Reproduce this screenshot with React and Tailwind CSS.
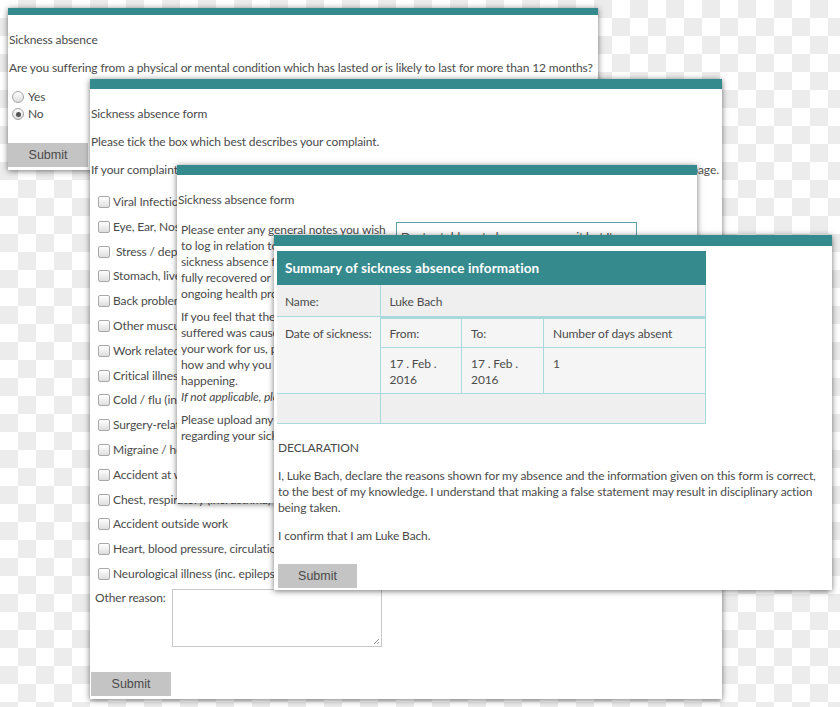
import React from "react";

const complaints = [
  "Viral Infection",
  "Eye, Ear, Nose, Mouth, Dental",
  " Stress / depression / anxiety",
  "Stomach, liver, kidney, digestion",
  "Back problems",
  "Other musculoskeletal problems",
  "Work related stress",
  "Critical illness",
  "Cold / flu (inc. sore throat)",
  "Surgery-related illness",
  "Migraine / headache",
  "Accident at work",
  "Chest, respiratory (inc. asthma)",
  "Accident outside work",
  "Heart, blood pressure, circulation",
  "Neurological illness (inc. epilepsy)",
];

const Window = ({ className, bar, children }) => (
  <div className={`absolute bg-white shadow-[0_1px_6px_rgba(0,0,0,0.55)] ${className}`}>
    <div className={`bg-[#358a8e] ${bar}`} />
    {children}
  </div>
);

const SubmitButton = ({ className }) => (
  <div
    className={`h-6 w-20 bg-[#c4c4c4] flex items-center justify-center font-['Liberation_Sans',sans-serif] tracking-normal text-[12.5px] text-[#4a4a4a] ${className}`}
  >
    Submit
  </div>
);

const Radio = ({ checked }) => (
  <span className="w-3 h-3 rounded-full border border-[#a3a3a3] bg-gradient-to-b from-white to-[#dcdcdc] flex items-center justify-center">
    {checked && <span className="w-[5px] h-[5px] rounded-full bg-[#555]" />}
  </span>
);

const Checkbox = () => (
  <span className="w-3 h-3 shrink-0 rounded-[2px] border border-[#a8a8a8] bg-gradient-to-b from-white to-[#dedede]" />
);

export default function App() {
  return (
    <div className="relative w-[840px] h-[707px] overflow-hidden bg-[repeating-conic-gradient(#ececec_0_25%,#ffffff_0_50%)] bg-[length:36px_36px] font-['Lato',sans-serif] text-[12px] leading-4 tracking-[-0.12px] text-[#4b4b4b]">
      {/* window 1 */}
      <Window className="left-[8px] top-[8px] w-[590px] h-[162px]" bar="h-[7px]">
        <div className="pl-[1px] pt-[17px]">
          <p>Sickness absence</p>
          <p className="mt-3 whitespace-nowrap">
            Are you suffering from a physical or mental condition which has lasted or is likely to last for more than 12 months?
          </p>
          <div className="mt-[13px] pl-[3px] flex flex-col gap-[1px]">
            <label className="flex items-center gap-[4px] h-4">
              <Radio /> Yes
            </label>
            <label className="flex items-center gap-[4px] h-4">
              <Radio checked /> No
            </label>
          </div>
        </div>
        <SubmitButton className="absolute left-0 bottom-[3px]" />
      </Window>

      {/* window 2 */}
      <Window className="left-[90px] top-[79px] w-[632px] h-[620px]" bar="h-[10px]">
        <div className="pl-[1px] pt-[17px]">
          <p>Sickness absence form</p>
          <p className="mt-3">Please tick the box which best describes your complaint.</p>
          <p className="mt-3 whitespace-nowrap tracking-[-0.08px]">
            If your complaint does not appear in the list below, please give details in the 'Other reason' box at the bottom of this page.
          </p>
          <ul className="mt-[11.6px] pl-[7px]">
            {complaints.map((c) => (
              <li key={c} className="h-[24.8px] flex items-center gap-[3px] whitespace-pre">
                <Checkbox />
                <span>{c}</span>
              </li>
            ))}
          </ul>
          <div className="mt-[2.6px] pl-[4px] flex items-start gap-[6px]">
            <span className="pt-[1px]">Other reason:</span>
            <div className="relative w-[210px] h-[58px] border border-[#c8c8c8]">
              <svg className="absolute right-[1px] bottom-[1px]" width="7" height="7" viewBox="0 0 7 7">
                <path d="M6 1 L1 6 M6 4 L4 6" stroke="#999" strokeWidth="1" />
              </svg>
            </div>
          </div>
          <SubmitButton className="mt-[25px]" />
        </div>
      </Window>

      {/* window 3 */}
      <Window className="left-[177px] top-[165px] w-[520px] h-[338px]" bar="h-[10px]">
        <div className="pl-[1px] pt-[17px]">
          <p>Sickness absence form</p>
          <div className="mt-[14px] flex gap-[5px] pl-[3px]">
            <div className="w-[210px] flex flex-col gap-[7px] whitespace-nowrap overflow-hidden">
              <p>
                Please enter any general notes you wish
                <br />
                to log in relation to this
                <br />
                sickness absence for example if you have
                <br />
                fully recovered or if you have any
                <br />
                ongoing health problems.
              </p>
              <p>
                If you feel that the illness or injury you
                <br />
                suffered was caused or made worse by
                <br />
                your work for us, please tell us
                <br />
                how and why you think this is
                <br />
                happening.
                <br />
                <em>If not applicable, please leave blank.</em>
              </p>
              <p>
                Please upload any supporting documents
                <br />
                regarding your sickness absence.
              </p>
            </div>
            <div className="w-[241px] h-[80px] border border-[#5c9fa3] px-[4px] py-[6px] whitespace-nowrap overflow-hidden">
              Doctor told me to keep an eye on it but I'm
            </div>
          </div>
        </div>
      </Window>

      {/* window 4 */}
      <Window className="left-[274px] top-[235px] w-[558px] h-[355px]" bar="h-[11px]">
        <div className="pl-[3px] pt-[5px]">
          <table className="w-[429px] border-collapse">
            <tbody>
              <tr>
                <td colSpan={2} className="h-[34px] bg-[#358a8e] px-2 text-white font-bold text-[13.5px] tracking-[0.1px]">
                  Summary of sickness absence information
                </td>
              </tr>
              <tr className="bg-[#efefef]">
                <td className="w-[102px] h-[31px] px-2 pt-[3px] border-r border-b border-[#a9d9dc]">Name:</td>
                <td className="px-[9px] pt-[3px] border-b border-r border-[#a9d9dc]">Luke Bach</td>
              </tr>
              <tr className="bg-[#f5f5f5]">
                <td className="px-2 pt-[9px] align-top whitespace-nowrap border-r border-b border-[#a9d9dc]">Date of sickness:</td>
                <td className="p-0 border-b border-r border-[#a9d9dc]">
                  <table className="w-full border-collapse">
                    <tbody>
                      <tr>
                        <td className="w-[81px] h-[30px] px-[9px] pt-[2px] border border-[#a9d9dc] border-l-0 border-t-[2px]">From:</td>
                        <td className="w-[82px] px-[9px] pt-[2px] border border-[#a9d9dc] border-t-[2px]">To:</td>
                        <td className="px-[9px] pt-[2px] border border-[#a9d9dc] border-r-0 border-t-[2px] whitespace-nowrap">Number of days absent</td>
                      </tr>
                      <tr>
                        <td className="h-[45px] px-[9px] border border-[#a9d9dc] border-l-0 border-b-0 align-top pt-[8px]">
                          17 . Feb .
                          <br />
                          2016
                        </td>
                        <td className="px-[9px] border border-[#a9d9dc] border-b-0 align-top pt-[8px]">
                          17 . Feb .
                          <br />
                          2016
                        </td>
                        <td className="px-[9px] border border-[#a9d9dc] border-r-0 border-b-0 align-top pt-[8px]">1</td>
                      </tr>
                    </tbody>
                  </table>
                </td>
              </tr>
              <tr className="bg-[#efefef]">
                <td className="h-[30px] border-r border-b border-[#a9d9dc]" />
                <td className="border-b border-r border-[#a9d9dc]" />
              </tr>
            </tbody>
          </table>
          <div className="pl-[1px]">
            <p className="mt-4">DECLARATION</p>
            <p className="mt-3 whitespace-nowrap">
              I, Luke Bach, declare the reasons shown for my absence and the information given on this form is correct,
              <br />
              to the best of my knowledge. I understand that making a false statement may result in disciplinary action
              <br />
              being taken.
            </p>
            <p className="mt-3">I confirm that I am Luke Bach.</p>
            <SubmitButton className="mt-5 w-[79px]" />
          </div>
        </div>
      </Window>
    </div>
  );
}
